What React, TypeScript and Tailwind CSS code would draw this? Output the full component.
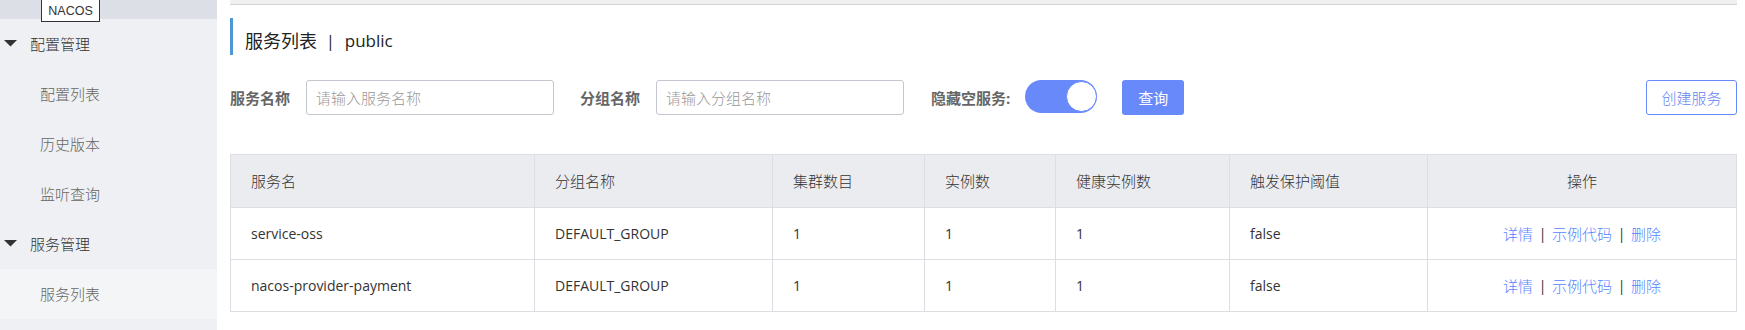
import React from "react";

const rows = [
  { name: "service-oss", group: "DEFAULT_GROUP", cluster: "1", inst: "1", healthy: "1", threshold: "false" },
  { name: "nacos-provider-payment", group: "DEFAULT_GROUP", cluster: "1", inst: "1", healthy: "1", threshold: "false" },
];

const headers = ["服务名", "分组名称", "集群数目", "实例数", "健康实例数", "触发保护阈值"];

function Caret() {
  return (
    <svg width="13" height="7" viewBox="0 0 13 7" className="absolute left-[4px] top-[21px]">
      <polygon points="0,0 13,0 6.5,6.5" fill="#333" />
    </svg>
  );
}

function Sidebar() {
  const item = "h-[50px] flex items-center text-[15px] leading-[20px] font-light";
  return (
    <div className="w-[217px] shrink-0 bg-[#eef0f3] h-full">
      <div className="relative h-[19px] bg-[#dcdfe6]">
        <div className="absolute left-[41px] top-[-3px] w-[59px] h-[25px] bg-white border border-[#333] flex items-end justify-center pb-[3px] font-['Liberation_Sans',Arial,sans-serif] text-[12.5px] leading-[14px] text-[#333]">
          NACOS
        </div>
      </div>
      <div className={`${item} relative pl-[30px] text-[#333]`}>
        <Caret />
        配置管理
      </div>
      <div className={`${item} pl-[40px] text-[#666]`}>配置列表</div>
      <div className={`${item} pl-[40px] text-[#666]`}>历史版本</div>
      <div className={`${item} pl-[40px] text-[#666]`}>监听查询</div>
      <div className={`${item} relative pl-[30px] text-[#333]`}>
        <Caret />
        服务管理
      </div>
      <div className={`${item} pl-[40px] text-[#666] bg-[#f4f5f7]`}>服务列表</div>
    </div>
  );
}

function Links() {
  return (
    <div className="flex items-center justify-center w-full text-[15px] leading-[20px] font-light">
      <span className="text-[#5584ff]">详情</span>
      <span className="inline-block w-[19px] text-center text-[14px] font-normal text-[#333]">|</span>
      <span className="text-[#5584ff]">示例代码</span>
      <span className="inline-block w-[19px] text-center text-[14px] font-normal text-[#333]">|</span>
      <span className="text-[#5584ff]">删除</span>
    </div>
  );
}

export default function App() {
  const cell = "border-r border-b border-[#dcdee3] flex items-center pl-[20px] text-[#333]";
  return (
    <div className="w-[1745px] h-[330px] overflow-hidden flex bg-white font-['Open_Sans','Noto_Sans_CJK_SC',sans-serif]">
      <Sidebar />
      <div className="flex-1 pl-[13px] pr-[8px] flex flex-col">
        <div className="h-[5px] bg-[#f0f0f0] border-b border-[#d6d6d6]" />
        <div className="mt-[13px] h-[37px] border-l-[3px] border-[#5096d2] pl-[12px] pt-[11px] text-[#222] leading-[24px] flex items-start">
          <span className="text-[18px]">服务列表</span>
          <span className="text-[16px] ml-[9px]">|</span>
          <span className="text-[17px] ml-[10px]">public</span>
        </div>
        <div className="mt-[25px] h-[35px] flex items-center">
          <span className="text-[15px] font-bold text-[#666] leading-[20px]">服务名称</span>
          <div className="ml-[16px] w-[248px] h-[35px] border border-[#c4c6cf] rounded-[3px] flex items-center pl-[9px] text-[15px] font-light text-[#999] leading-[20px]">
            请输入服务名称
          </div>
          <span className="ml-[26px] text-[15px] font-bold text-[#666] leading-[20px]">分组名称</span>
          <div className="ml-[16px] w-[248px] h-[35px] border border-[#c4c6cf] rounded-[3px] flex items-center pl-[9px] text-[15px] font-light text-[#999] leading-[20px]">
            请输入分组名称
          </div>
          <span className="ml-[27px] text-[15px] font-bold text-[#666] leading-[20px]">隐藏空服务:</span>
          <div className="ml-[15px] self-start relative w-[72px] h-[33px] rounded-full bg-[#6789fa]">
            <div className="absolute right-[0px] top-[1px] w-[31px] h-[31px] rounded-full bg-white border border-[#6789fa]" />
          </div>
          <div className="ml-[25px] w-[62px] h-[35px] rounded-[3px] bg-[#6789fa] text-white text-[15px] leading-[20px] flex items-center justify-center">
            查询
          </div>
          <div className="ml-auto w-[91px] h-[35px] rounded-[3px] border border-[#6789fa] text-[#6383f5] text-[15px] font-light leading-[20px] flex items-center justify-center">
            创建服务
          </div>
        </div>
        <div className="mt-[39px] grid grid-cols-[304px_238px_152px_131px_174px_198px_309px] border-l border-t border-[#dcdee3]">
          {headers.map((h) => (
            <div key={h} className={`${cell} h-[53px] bg-[#ebecf0] text-[15px] leading-[20px] font-light`}>
              {h}
            </div>
          ))}
          <div className="border-r border-b border-[#dcdee3] h-[53px] bg-[#ebecf0] text-[15px] leading-[20px] font-light text-[#333] flex items-center justify-center">
            操作
          </div>
          {rows.map((r) => (
            <React.Fragment key={r.name}>
              <div className={`${cell} h-[52px] text-[14px]`}>{r.name}</div>
              <div className={`${cell} h-[52px] text-[14px]`}>{r.group}</div>
              <div className={`${cell} h-[52px] text-[14px]`}>{r.cluster}</div>
              <div className={`${cell} h-[52px] text-[14px]`}>{r.inst}</div>
              <div className={`${cell} h-[52px] text-[14px]`}>{r.healthy}</div>
              <div className={`${cell} h-[52px] text-[14px]`}>{r.threshold}</div>
              <div className="border-r border-b border-[#dcdee3] h-[52px] flex items-center">
                <Links />
              </div>
            </React.Fragment>
          ))}
        </div>
      </div>
    </div>
  );
}
